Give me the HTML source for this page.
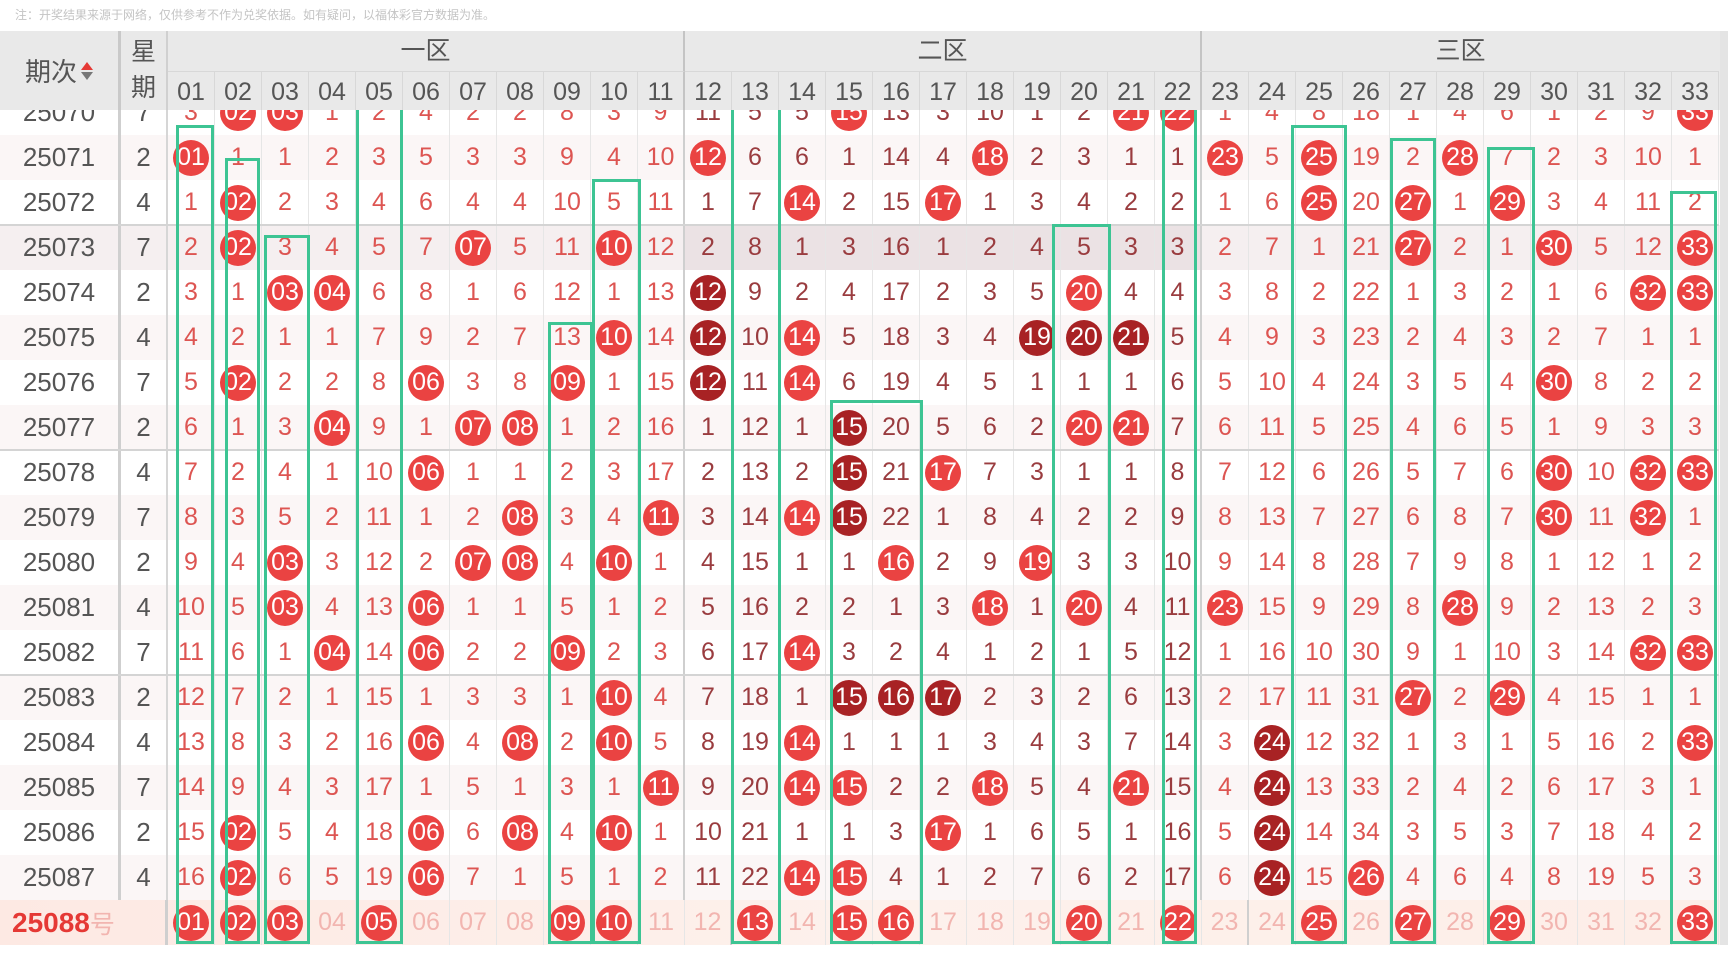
<!DOCTYPE html>
<html><head><meta charset="utf-8"><style>
*{margin:0;padding:0;box-sizing:border-box}
body{width:1728px;height:962px;overflow:hidden;background:#fff;font-family:"Liberation Sans","Noto Sans CJK SC",sans-serif;position:relative}
.note{position:absolute;left:15px;top:6px;font-size:12px;color:#c4c4c4}
.hd{position:absolute;left:0;top:31px;width:1728px;height:79px;background:#e9e9e9;z-index:5;color:#555}
.hd .qc{position:absolute;left:0;top:0;width:121px;height:79px;display:flex;align-items:center;justify-content:center;font-size:26px;border-right:3px solid #c9c9c9}
.arr{display:inline-block;margin-left:4px;vertical-align:middle}
.arr i{display:block;width:0;height:0;border-left:6px solid transparent;border-right:6px solid transparent}
.hd .xq{position:absolute;left:121px;top:0;width:47px;height:79px;font-size:25px;text-align:center;line-height:36px;padding-top:3px;border-right:2px solid #d0d0d0}
.zone{position:absolute;top:0;height:41px;font-size:25px;text-align:center;line-height:41px;border-bottom:1px solid #d8d8d8}
.nums{position:absolute;left:168px;top:41px;height:38px;display:flex}
.nums span{width:47px;text-align:center;font-size:25px;line-height:40px;border-right:1px solid #d8d8d8}
.nums span.z{border-right:2px solid #c4c4c4}
.r{position:absolute;left:0;height:45px;width:1728px;display:flex}
.r>i{font-style:normal;width:47px;height:45px;display:flex;align-items:center;justify-content:center;font-size:25px;color:#dd5552;border-right:1px solid #e6e6e6}
.r>i:nth-child(n+14):nth-child(-n+24){color:#9a3c3f}
.r>i:nth-child(13),.r>i:nth-child(24){border-right:2px solid #cfcfcf}
.r>u{text-decoration:none;display:flex;align-items:center;justify-content:center;font-size:26px;color:#555;height:45px}
.r>u.p{width:121px;border-right:3px solid #cfcfcf}
.r>u.w{width:47px;border-right:2px solid #d6d6d6}
.r b{display:flex;align-items:center;justify-content:center;width:36px;height:36px;border-radius:50%;background:#ea4342;color:#fff;font-weight:normal;font-size:25px}
.r b.k{background:#a82224}
.alt{background:#fbf6f6}
.hl{background:#f5eff0}
.hl>i:nth-child(n+14):nth-child(-n+24){background:#ebe2e4}
.r.last{background:linear-gradient(90deg,#fde9e3,#fdf1ec 50%,#fdeee8)}
.r.last>i:nth-child(n){color:#f2b5b0}
.r.last>u.p{color:#e53935;font-weight:bold;font-size:28px;justify-content:flex-start;padding-left:12px;width:168px;border-right:3px solid #cfcfcf}
.r.last>u.p em{font-style:normal;font-weight:normal;color:#f2b5b0;font-size:25px}
.sep{position:absolute;left:0;width:1719px;height:2px;background:#d4d4d4;z-index:2}
.g{position:absolute;border:3px solid #3dc493;z-index:3;pointer-events:none}
.sb{position:absolute;left:1720px;top:31px;width:8px;height:914px;background:#e4e4e4;z-index:6}
.foot{position:absolute;left:0;top:945px;width:1728px;height:17px;background:#fff;z-index:6}
</style></head><body>
<div class="note">注：开奖结果来源于网络，仅供参考不作为兑奖依据。如有疑问，以福体彩官方数据为准。</div>
<div class="hd">
<div class="qc">期次<span class="arr"><i style="border-bottom:8px solid #e53935;margin-bottom:2px"></i><i style="border-top:8px solid #777"></i></span></div>
<div class="xq">星<br>期</div>
<div class="zone" style="left:168px;width:517px;border-right:2px solid #c4c4c4">一区</div>
<div class="zone" style="left:685px;width:517px;border-right:2px solid #c4c4c4">二区</div>
<div class="zone" style="left:1202px;width:517px">三区</div>
<div class="nums"><span>01</span><span>02</span><span>03</span><span>04</span><span>05</span><span>06</span><span>07</span><span>08</span><span>09</span><span>10</span><span class="z">11</span><span>12</span><span>13</span><span>14</span><span>15</span><span>16</span><span>17</span><span>18</span><span>19</span><span>20</span><span>21</span><span class="z">22</span><span>23</span><span>24</span><span>25</span><span>26</span><span>27</span><span>28</span><span>29</span><span>30</span><span>31</span><span>32</span><span>33</span></div>
</div>
<div class="sb"></div>

<div class="r" style="top:90px"><u class="p">25070</u><u class="w">7</u><i>3</i><i><b>02</b></i><i><b>03</b></i><i>1</i><i>2</i><i>4</i><i>2</i><i>2</i><i>8</i><i>3</i><i>9</i><i>11</i><i>5</i><i>5</i><i><b>15</b></i><i>13</i><i>3</i><i>10</i><i>1</i><i>2</i><i><b>21</b></i><i><b>22</b></i><i>1</i><i>4</i><i>8</i><i>18</i><i>1</i><i>4</i><i>6</i><i>1</i><i>2</i><i>9</i><i><b>33</b></i></div>
<div class="r alt" style="top:135px"><u class="p">25071</u><u class="w">2</u><i><b>01</b></i><i>1</i><i>1</i><i>2</i><i>3</i><i>5</i><i>3</i><i>3</i><i>9</i><i>4</i><i>10</i><i><b>12</b></i><i>6</i><i>6</i><i>1</i><i>14</i><i>4</i><i><b>18</b></i><i>2</i><i>3</i><i>1</i><i>1</i><i><b>23</b></i><i>5</i><i><b>25</b></i><i>19</i><i>2</i><i><b>28</b></i><i>7</i><i>2</i><i>3</i><i>10</i><i>1</i></div>
<div class="r" style="top:180px"><u class="p">25072</u><u class="w">4</u><i>1</i><i><b>02</b></i><i>2</i><i>3</i><i>4</i><i>6</i><i>4</i><i>4</i><i>10</i><i>5</i><i>11</i><i>1</i><i>7</i><i><b>14</b></i><i>2</i><i>15</i><i><b>17</b></i><i>1</i><i>3</i><i>4</i><i>2</i><i>2</i><i>1</i><i>6</i><i><b>25</b></i><i>20</i><i><b>27</b></i><i>1</i><i><b>29</b></i><i>3</i><i>4</i><i>11</i><i>2</i></div>
<div class="r hl" style="top:225px"><u class="p">25073</u><u class="w">7</u><i>2</i><i><b>02</b></i><i>3</i><i>4</i><i>5</i><i>7</i><i><b>07</b></i><i>5</i><i>11</i><i><b>10</b></i><i>12</i><i>2</i><i>8</i><i>1</i><i>3</i><i>16</i><i>1</i><i>2</i><i>4</i><i>5</i><i>3</i><i>3</i><i>2</i><i>7</i><i>1</i><i>21</i><i><b>27</b></i><i>2</i><i>1</i><i><b>30</b></i><i>5</i><i>12</i><i><b>33</b></i></div>
<div class="r" style="top:270px"><u class="p">25074</u><u class="w">2</u><i>3</i><i>1</i><i><b>03</b></i><i><b>04</b></i><i>6</i><i>8</i><i>1</i><i>6</i><i>12</i><i>1</i><i>13</i><i><b class="k">12</b></i><i>9</i><i>2</i><i>4</i><i>17</i><i>2</i><i>3</i><i>5</i><i><b>20</b></i><i>4</i><i>4</i><i>3</i><i>8</i><i>2</i><i>22</i><i>1</i><i>3</i><i>2</i><i>1</i><i>6</i><i><b>32</b></i><i><b>33</b></i></div>
<div class="r alt" style="top:315px"><u class="p">25075</u><u class="w">4</u><i>4</i><i>2</i><i>1</i><i>1</i><i>7</i><i>9</i><i>2</i><i>7</i><i>13</i><i><b>10</b></i><i>14</i><i><b class="k">12</b></i><i>10</i><i><b>14</b></i><i>5</i><i>18</i><i>3</i><i>4</i><i><b class="k">19</b></i><i><b class="k">20</b></i><i><b class="k">21</b></i><i>5</i><i>4</i><i>9</i><i>3</i><i>23</i><i>2</i><i>4</i><i>3</i><i>2</i><i>7</i><i>1</i><i>1</i></div>
<div class="r" style="top:360px"><u class="p">25076</u><u class="w">7</u><i>5</i><i><b>02</b></i><i>2</i><i>2</i><i>8</i><i><b>06</b></i><i>3</i><i>8</i><i><b>09</b></i><i>1</i><i>15</i><i><b class="k">12</b></i><i>11</i><i><b>14</b></i><i>6</i><i>19</i><i>4</i><i>5</i><i>1</i><i>1</i><i>1</i><i>6</i><i>5</i><i>10</i><i>4</i><i>24</i><i>3</i><i>5</i><i>4</i><i><b>30</b></i><i>8</i><i>2</i><i>2</i></div>
<div class="r alt" style="top:405px"><u class="p">25077</u><u class="w">2</u><i>6</i><i>1</i><i>3</i><i><b>04</b></i><i>9</i><i>1</i><i><b>07</b></i><i><b>08</b></i><i>1</i><i>2</i><i>16</i><i>1</i><i>12</i><i>1</i><i><b class="k">15</b></i><i>20</i><i>5</i><i>6</i><i>2</i><i><b>20</b></i><i><b>21</b></i><i>7</i><i>6</i><i>11</i><i>5</i><i>25</i><i>4</i><i>6</i><i>5</i><i>1</i><i>9</i><i>3</i><i>3</i></div>
<div class="r" style="top:450px"><u class="p">25078</u><u class="w">4</u><i>7</i><i>2</i><i>4</i><i>1</i><i>10</i><i><b>06</b></i><i>1</i><i>1</i><i>2</i><i>3</i><i>17</i><i>2</i><i>13</i><i>2</i><i><b class="k">15</b></i><i>21</i><i><b>17</b></i><i>7</i><i>3</i><i>1</i><i>1</i><i>8</i><i>7</i><i>12</i><i>6</i><i>26</i><i>5</i><i>7</i><i>6</i><i><b>30</b></i><i>10</i><i><b>32</b></i><i><b>33</b></i></div>
<div class="r alt" style="top:495px"><u class="p">25079</u><u class="w">7</u><i>8</i><i>3</i><i>5</i><i>2</i><i>11</i><i>1</i><i>2</i><i><b>08</b></i><i>3</i><i>4</i><i><b>11</b></i><i>3</i><i>14</i><i><b>14</b></i><i><b class="k">15</b></i><i>22</i><i>1</i><i>8</i><i>4</i><i>2</i><i>2</i><i>9</i><i>8</i><i>13</i><i>7</i><i>27</i><i>6</i><i>8</i><i>7</i><i><b>30</b></i><i>11</i><i><b>32</b></i><i>1</i></div>
<div class="r" style="top:540px"><u class="p">25080</u><u class="w">2</u><i>9</i><i>4</i><i><b>03</b></i><i>3</i><i>12</i><i>2</i><i><b>07</b></i><i><b>08</b></i><i>4</i><i><b>10</b></i><i>1</i><i>4</i><i>15</i><i>1</i><i>1</i><i><b>16</b></i><i>2</i><i>9</i><i><b>19</b></i><i>3</i><i>3</i><i>10</i><i>9</i><i>14</i><i>8</i><i>28</i><i>7</i><i>9</i><i>8</i><i>1</i><i>12</i><i>1</i><i>2</i></div>
<div class="r alt" style="top:585px"><u class="p">25081</u><u class="w">4</u><i>10</i><i>5</i><i><b>03</b></i><i>4</i><i>13</i><i><b>06</b></i><i>1</i><i>1</i><i>5</i><i>1</i><i>2</i><i>5</i><i>16</i><i>2</i><i>2</i><i>1</i><i>3</i><i><b>18</b></i><i>1</i><i><b>20</b></i><i>4</i><i>11</i><i><b>23</b></i><i>15</i><i>9</i><i>29</i><i>8</i><i><b>28</b></i><i>9</i><i>2</i><i>13</i><i>2</i><i>3</i></div>
<div class="r" style="top:630px"><u class="p">25082</u><u class="w">7</u><i>11</i><i>6</i><i>1</i><i><b>04</b></i><i>14</i><i><b>06</b></i><i>2</i><i>2</i><i><b>09</b></i><i>2</i><i>3</i><i>6</i><i>17</i><i><b>14</b></i><i>3</i><i>2</i><i>4</i><i>1</i><i>2</i><i>1</i><i>5</i><i>12</i><i>1</i><i>16</i><i>10</i><i>30</i><i>9</i><i>1</i><i>10</i><i>3</i><i>14</i><i><b>32</b></i><i><b>33</b></i></div>
<div class="r alt" style="top:675px"><u class="p">25083</u><u class="w">2</u><i>12</i><i>7</i><i>2</i><i>1</i><i>15</i><i>1</i><i>3</i><i>3</i><i>1</i><i><b>10</b></i><i>4</i><i>7</i><i>18</i><i>1</i><i><b class="k">15</b></i><i><b class="k">16</b></i><i><b class="k">17</b></i><i>2</i><i>3</i><i>2</i><i>6</i><i>13</i><i>2</i><i>17</i><i>11</i><i>31</i><i><b>27</b></i><i>2</i><i><b>29</b></i><i>4</i><i>15</i><i>1</i><i>1</i></div>
<div class="r" style="top:720px"><u class="p">25084</u><u class="w">4</u><i>13</i><i>8</i><i>3</i><i>2</i><i>16</i><i><b>06</b></i><i>4</i><i><b>08</b></i><i>2</i><i><b>10</b></i><i>5</i><i>8</i><i>19</i><i><b>14</b></i><i>1</i><i>1</i><i>1</i><i>3</i><i>4</i><i>3</i><i>7</i><i>14</i><i>3</i><i><b class="k">24</b></i><i>12</i><i>32</i><i>1</i><i>3</i><i>1</i><i>5</i><i>16</i><i>2</i><i><b>33</b></i></div>
<div class="r alt" style="top:765px"><u class="p">25085</u><u class="w">7</u><i>14</i><i>9</i><i>4</i><i>3</i><i>17</i><i>1</i><i>5</i><i>1</i><i>3</i><i>1</i><i><b>11</b></i><i>9</i><i>20</i><i><b>14</b></i><i><b>15</b></i><i>2</i><i>2</i><i><b>18</b></i><i>5</i><i>4</i><i><b>21</b></i><i>15</i><i>4</i><i><b class="k">24</b></i><i>13</i><i>33</i><i>2</i><i>4</i><i>2</i><i>6</i><i>17</i><i>3</i><i>1</i></div>
<div class="r" style="top:810px"><u class="p">25086</u><u class="w">2</u><i>15</i><i><b>02</b></i><i>5</i><i>4</i><i>18</i><i><b>06</b></i><i>6</i><i><b>08</b></i><i>4</i><i><b>10</b></i><i>1</i><i>10</i><i>21</i><i>1</i><i>1</i><i>3</i><i><b>17</b></i><i>1</i><i>6</i><i>5</i><i>1</i><i>16</i><i>5</i><i><b class="k">24</b></i><i>14</i><i>34</i><i>3</i><i>5</i><i>3</i><i>7</i><i>18</i><i>4</i><i>2</i></div>
<div class="r alt" style="top:855px"><u class="p">25087</u><u class="w">4</u><i>16</i><i><b>02</b></i><i>6</i><i>5</i><i>19</i><i><b>06</b></i><i>7</i><i>1</i><i>5</i><i>1</i><i>2</i><i>11</i><i>22</i><i><b>14</b></i><i><b>15</b></i><i>4</i><i>1</i><i>2</i><i>7</i><i>6</i><i>2</i><i>17</i><i>6</i><i><b class="k">24</b></i><i>15</i><i><b>26</b></i><i>4</i><i>6</i><i>4</i><i>8</i><i>19</i><i>5</i><i>3</i></div>
<div class="r last" style="top:900px"><u class="p">25088<em>号</em></u><i><b>01</b></i><i><b>02</b></i><i><b>03</b></i><i>04</i><i><b>05</b></i><i>06</i><i>07</i><i>08</i><i><b>09</b></i><i><b>10</b></i><i>11</i><i>12</i><i><b>13</b></i><i>14</i><i><b>15</b></i><i><b>16</b></i><i>17</i><i>18</i><i>19</i><i><b>20</b></i><i>21</i><i><b>22</b></i><i>23</i><i>24</i><i><b>25</b></i><i>26</i><i><b>27</b></i><i>28</i><i><b>29</b></i><i>30</i><i>31</i><i>32</i><i><b>33</b></i></div>

<div class="sep" style="top:224px"></div>
<div class="sep" style="top:449px"></div>
<div class="sep" style="top:674px"></div>

<div class="g" style="left:176px;top:125px;width:38px;height:819px"></div>
<div class="g" style="left:225px;top:158px;width:35px;height:786px"></div>
<div class="g" style="left:264px;top:235px;width:46px;height:709px"></div>
<div class="g" style="left:356px;top:100px;width:47px;height:844px"></div>
<div class="g" style="left:548px;top:322px;width:45px;height:622px"></div>
<div class="g" style="left:592px;top:179px;width:49px;height:765px"></div>
<div class="g" style="left:731px;top:100px;width:50px;height:844px"></div>
<div class="g" style="left:830px;top:400px;width:93px;height:544px"></div>
<div class="g" style="left:1052px;top:224px;width:59px;height:720px"></div>
<div class="g" style="left:1162px;top:100px;width:35px;height:844px"></div>
<div class="g" style="left:1291px;top:125px;width:56px;height:819px"></div>
<div class="g" style="left:1390px;top:138px;width:46px;height:806px"></div>
<div class="g" style="left:1487px;top:147px;width:48px;height:797px"></div>
<div class="g" style="left:1670px;top:191px;width:47px;height:753px"></div>
<div class="foot"></div>
</body></html>
